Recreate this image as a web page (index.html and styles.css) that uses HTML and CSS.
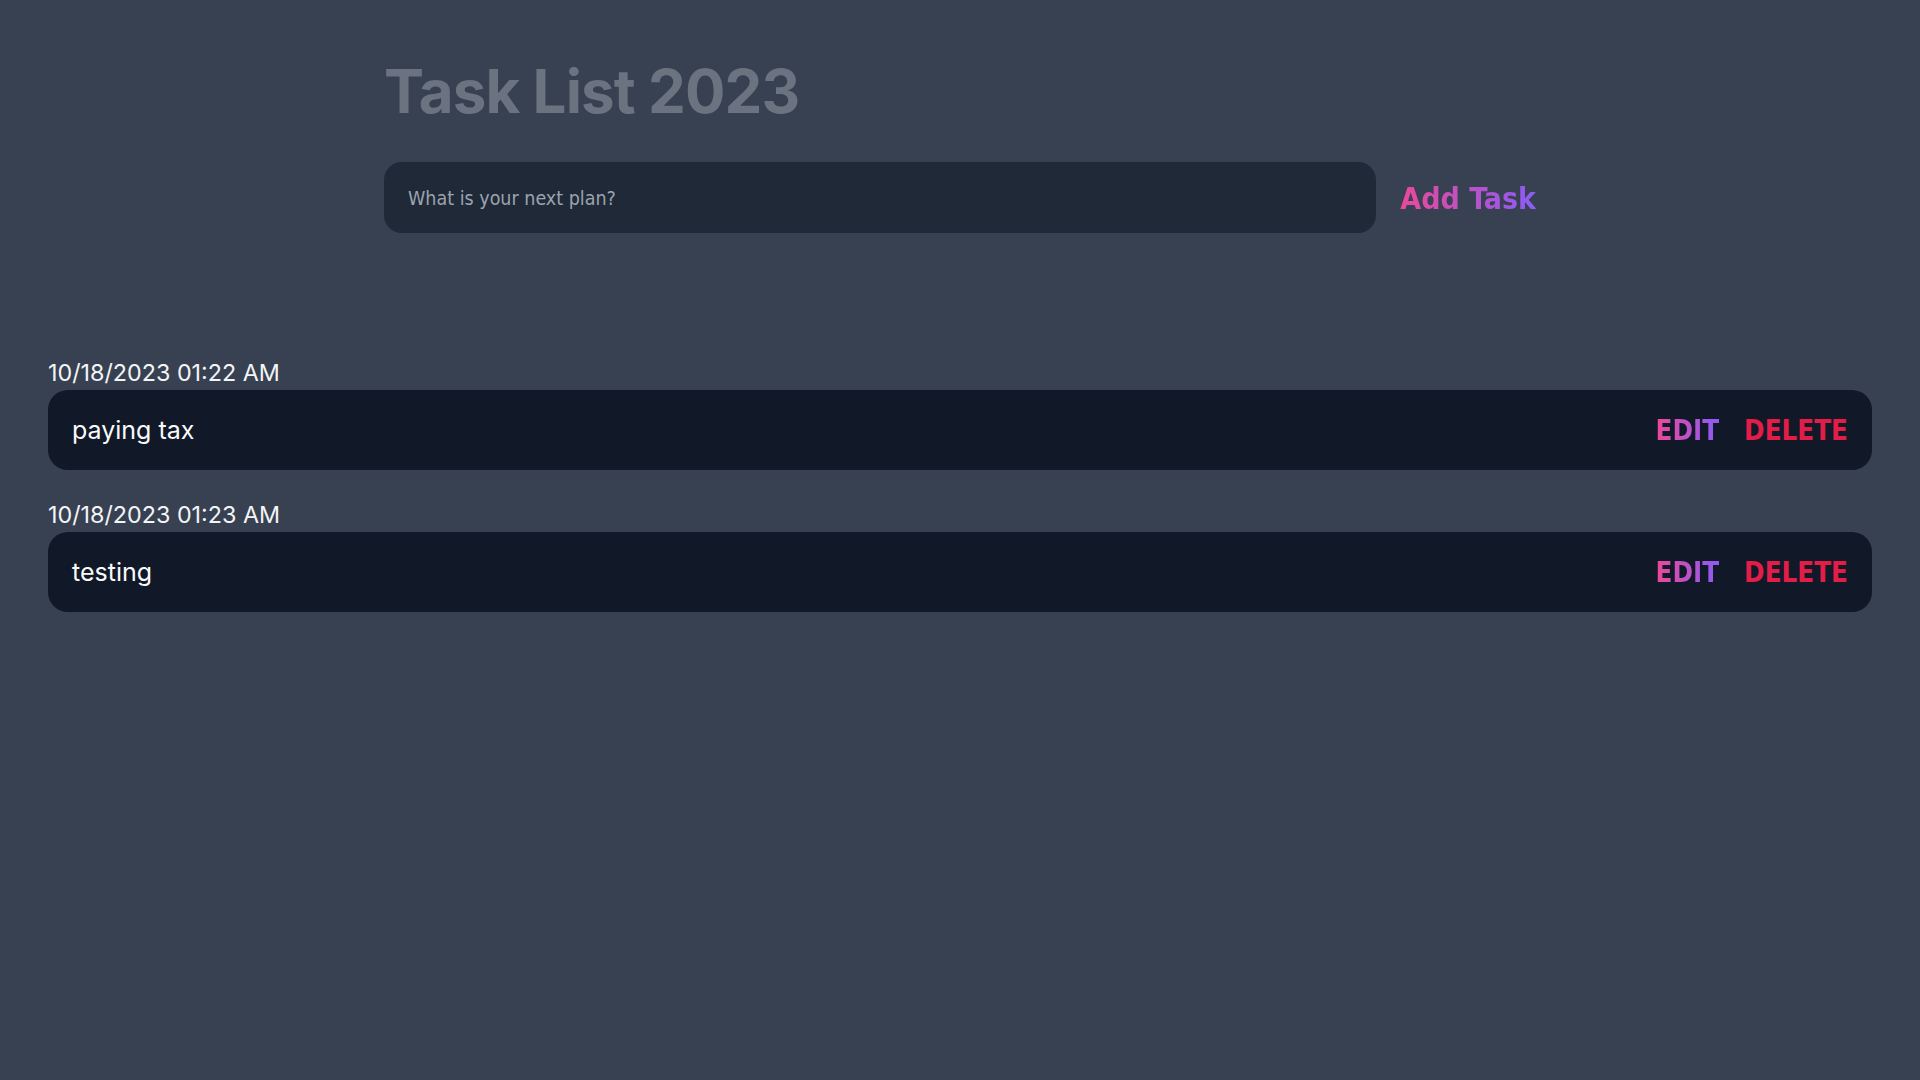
FILE: index.html
```html
<!DOCTYPE html>
<html lang="en">
<head>
<meta charset="utf-8">
<title>Task List 2023</title>
<link rel="stylesheet" href="styles.css">
</head>
<body>
  <header class="header">
    <h1 class="title">Task List 2023</h1>
    <form class="new-task" onsubmit="return false">
      <input class="new-task-input" type="text" placeholder="What is your next plan?">
      <button class="add-btn" type="submit"><span class="grad">Add Task</span></button>
    </form>
  </header>
  <main class="tasks">
    <div class="task-item">
      <div class="task-date">10/18/2023 01:22 AM</div>
      <div class="task">
        <div class="task-text">paying tax</div>
        <div class="actions">
          <button class="btn edit"><span class="grad">EDIT</span></button>
          <button class="btn delete">DELETE</button>
        </div>
      </div>
    </div>
    <div class="task-item">
      <div class="task-date">10/18/2023 01:23 AM</div>
      <div class="task">
        <div class="task-text">testing</div>
        <div class="actions">
          <button class="btn edit"><span class="grad">EDIT</span></button>
          <button class="btn delete">DELETE</button>
        </div>
      </div>
    </div>
  </main>
</body>
</html>
```
FILE: styles.css
```css
* { box-sizing: border-box; }
html, body { margin: 0; padding: 0; }
body {
  background: #374151;
  min-height: 100vh;
  font-family: "Inter", "Noto Sans", sans-serif;
  color: #f3f4f6;
}
.header {
  max-width: 1152px;
  margin: 0 auto;
  padding-top: 55px;
}
.title {
  margin: 0;
  font-family: "Inter", sans-serif;
  font-weight: 700;
  font-size: 60px;
  line-height: 72px;
  color: #6b7280;
  letter-spacing: -0.9px;
}
.new-task {
  display: flex;
  align-items: center;
  gap: 24px;
  margin-top: 35px;
}
.new-task-input {
  flex: 1;
  height: 71px;
  border: none;
  outline: none;
  border-radius: 18px;
  background: #1f2937;
  padding: 2px 24px 0;
  font-family: "DejaVu Sans Condensed", "DejaVu Sans", sans-serif;
  font-size: 19.5px;
  color: #e5e7eb;
}
.new-task-input::placeholder { color: #9ca3af; }
.add-btn {
  border: none;
  background: none;
  padding: 2px 0 0;
  cursor: pointer;
  font-family: "DejaVu Sans Condensed", "DejaVu Sans", sans-serif;
  font-weight: 700;
  font-size: 30px;
}
.grad {
  background: linear-gradient(to right, #ec4899, #8b5cf6);
  -webkit-background-clip: text;
  background-clip: text;
  color: transparent;
}
.tasks {
  margin-top: 122px;
  padding: 0 48px;
  display: flex;
  flex-direction: column;
  gap: 27px;
}
.task-date {
  font-size: 23.3px;
  line-height: 34px;
  color: #f3f4f6;
  padding-top: 1px;
}
.task {
  height: 80px;
  background: #111827;
  border-radius: 20px;
  display: flex;
  align-items: center;
  justify-content: space-between;
  padding: 0 24px;
}
.task-text {
  font-size: 25px;
  color: #f9fafb;
}
.actions {
  display: flex;
  gap: 25px;
  padding-top: 1px;
}
.btn {
  border: none;
  background: none;
  padding: 0;
  cursor: pointer;
  font-family: "DejaVu Sans Condensed", "DejaVu Sans", sans-serif;
  font-weight: 700;
  font-size: 27.5px;
  line-height: 1;
}
.delete { color: #e11d48; }
```
